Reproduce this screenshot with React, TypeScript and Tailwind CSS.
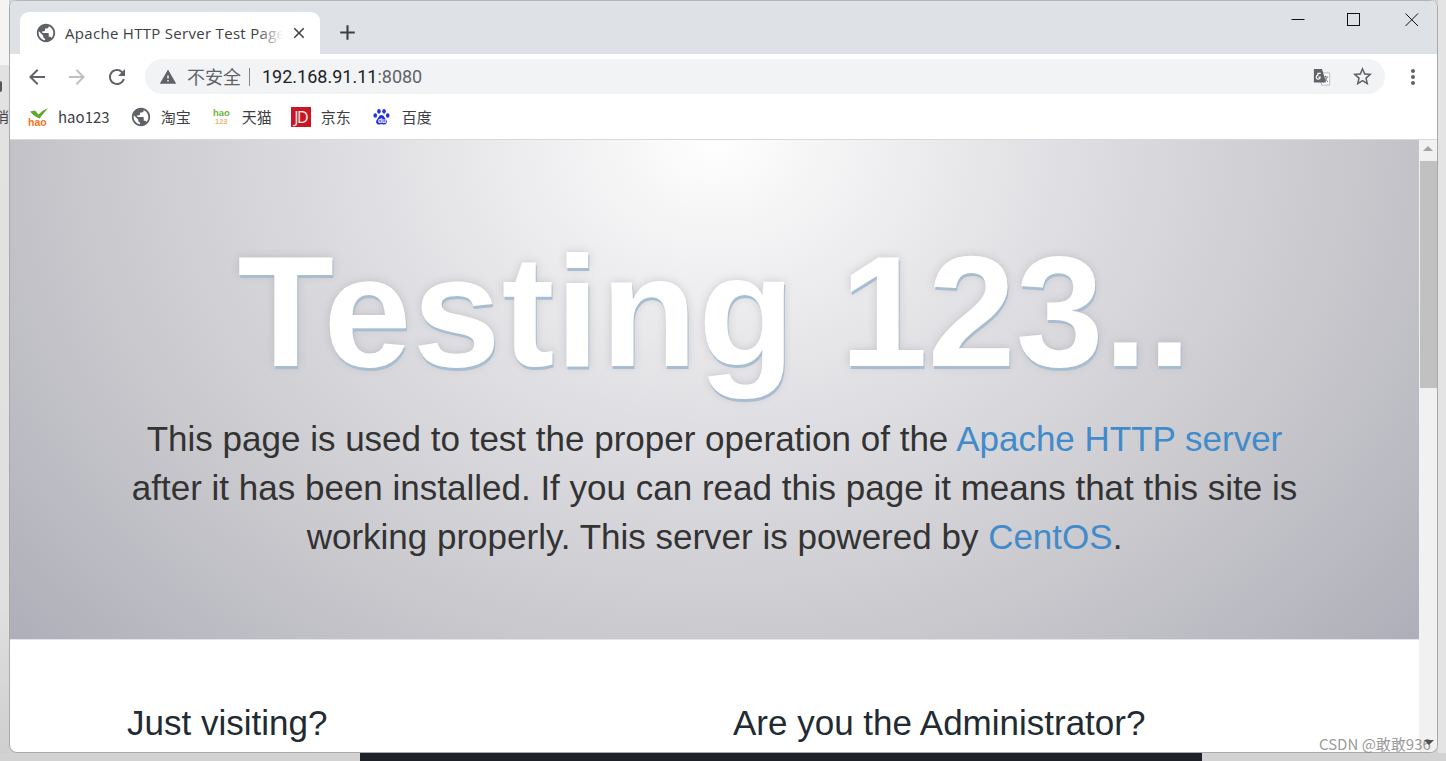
import { MdArrowBack, MdArrowForward, MdRefresh, MdMoreVert, MdWarning, MdClose, MdAdd, MdPublic, MdStarBorder } from "react-icons/md";

const cjk = "font-['Noto_Sans_CJK_SC','Liberation_Sans',sans-serif]";

function Hao() {
  return (
    <svg width="21" height="19" viewBox="0 0 21 19" className="shrink-0">
      <path d="M2 3.5 L7 2.5 L10.5 6.5 Q14 2.5 20 0 Q16 5 11.5 10.5 Q6 8.5 2 3.5Z" fill="#62a92b" />
      <text x="0" y="18" fontSize="10.5" fontWeight="700" fill="#f0781e" fontFamily="Liberation Sans" letterSpacing="0">hao</text>
    </svg>
  );
}

function Hao123Small() {
  return (
    <svg width="18" height="18" viewBox="0 0 18 18" className="shrink-0">
      <text x="0" y="8" fontSize="9.5" fontWeight="700" fill="#6cb33f" fontFamily="Liberation Sans">hao</text>
      <text x="2" y="16" fontSize="7.5" fontWeight="700" fill="#f2b27a" fontFamily="Liberation Sans">123</text>
    </svg>
  );
}

function Jd() {
  return (
    <div className="w-5 h-5 bg-[#c91623] text-[#fbe9ea] text-[16px] leading-5 text-center font-['Open_Sans',sans-serif] tracking-[-1.5px] shrink-0">JD</div>
  );
}

function Baidu() {
  return (
    <svg width="17" height="18" viewBox="0 0 18 18" className="shrink-0">
      <ellipse cx="6.3" cy="3" rx="1.9" ry="2.6" fill="#2932e1" />
      <ellipse cx="11.7" cy="3" rx="1.9" ry="2.6" fill="#2932e1" />
      <ellipse cx="2.4" cy="7.4" rx="1.9" ry="2.4" fill="#2932e1" />
      <ellipse cx="15.6" cy="7.4" rx="1.9" ry="2.4" fill="#2932e1" />
      <path d="M9 7 C6 7 6 10 4 12 C2 15 4.5 17.5 7 17 C8.5 16.7 9.5 16.7 11 17 C13.5 17.5 16 15 14 12 C12 10 12 7 9 7Z" fill="#2932e1" />
      <text x="5.2" y="15.5" fontSize="7" fontWeight="700" fill="#ffffff" fontFamily="Liberation Sans">du</text>
    </svg>
  );
}

function Bookmark({ icon, label, gap }: { icon: React.ReactNode; label: string; gap: string }) {
  return (
    <div className={`flex items-center ${gap}`}>
      {icon}
      <span className={`text-[15px] text-[#3c4043] ${cjk}`}>{label}</span>
    </div>
  );
}

function Translate() {
  return (
    <svg width="18" height="18" viewBox="0 0 20 20" className="shrink-0">
      <path d="M7.5 5.5 H18.5 V19 H9.5 Z" fill="#ffffff" stroke="#b4b6b9" strokeWidth="1" />
      <path d="M1 1 H10 L14.5 16 H1 Z" fill="#5f6368" />
      <path d="M8.6 6 H5.4 V8 A2.2 2.2 0 1 0 8 10.2 H6" fill="none" stroke="#ffffff" strokeWidth="1.3" />
      <path d="M11 10 H17 M14 8.5 V10 M12 16 L16 10.5 M13 11 L16.5 15.5" fill="none" stroke="#6a6d71" strokeWidth="1" />
    </svg>
  );
}

export default function App() {
  return (
    <div className="w-[1446px] h-[761px] overflow-hidden bg-[#d2d2d2] font-['Liberation_Sans',sans-serif]">
      <div className="flex h-[753px]">
        <div className="w-[9px] h-full bg-[linear-gradient(to_bottom,#f4f4f4_0,#f4f4f4_65px,#e2e2e2_65px,#e0e0e0_600px,#cfcfcf_100%)] overflow-hidden shrink-0 flex flex-col items-end">
          <div className="mt-[81px] mr-[7px] w-[2px] h-[11px] bg-[#555] rounded-r-full" />
          <div className={`mt-[14px] text-[14px] leading-5 text-[#444] whitespace-nowrap ${cjk}`}>消</div>
        </div>
        <div className="w-[1429px] h-full shrink-0 rounded-b-[8px] rounded-t-[8px] border-x border-b border-[#a9a9a9] overflow-hidden flex flex-col bg-white">
          {/* Title bar */}
          <div className="h-[54px] shrink-0 bg-[#dee1e6] border-t border-[#b5b5b5] flex items-end pl-[10px] relative">
            <div className="w-[300px] h-[42px] bg-white rounded-t-[9px] flex items-center pl-[15px] pr-[12px] relative">
              <MdPublic className="text-[#5f6368] shrink-0" size={22} />
              <div className="ml-[8px] w-[219px] overflow-hidden whitespace-nowrap text-[15px] tracking-[0.3px] text-[#3c4043] font-['Open_Sans',sans-serif] relative">
                Apache HTTP Server Test Page
                <div className="absolute right-0 top-0 bottom-0 w-[26px] bg-[linear-gradient(to_right,rgba(255,255,255,0),#ffffff)]" />
              </div>
              <MdClose className="text-[#3c4043] ml-[7px] shrink-0" size={18} />
            </div>
            <MdAdd className="text-[#3c4043] ml-[15px] mb-[9px] shrink-0" size={25} />
            <div className="ml-auto flex items-center self-start mt-[12px] pr-[18px]">
              <svg width="14" height="14" viewBox="0 0 14 14"><path d="M0.5 6.5 H13.5" stroke="#111" strokeWidth="1" /></svg>
              <svg width="14" height="14" viewBox="0 0 14 14" className="ml-[42px]"><rect x="0.5" y="0.5" width="12" height="12" fill="none" stroke="#111" strokeWidth="1" /></svg>
              <svg width="14" height="14" viewBox="0 0 14 14" className="ml-[44px]"><path d="M0.5 0.5 L13 13 M13 0.5 L0.5 13" stroke="#111" strokeWidth="1" /></svg>
            </div>
          </div>
          {/* Toolbar */}
          <div className="h-[46px] shrink-0 bg-white flex items-center pl-[15px] pb-[1px]">
            <MdArrowBack className="text-[#5f6368] shrink-0" size={24} />
            <MdArrowForward className="text-[#bdc1c6] ml-[16px] shrink-0" size={24} />
            <MdRefresh className="text-[#5f6368] ml-[16px] shrink-0" size={24} />
            <div className="ml-[16px] w-[1240px] h-[35px] rounded-full bg-[#f1f3f4] flex items-center pl-[14px] pr-[11px] shrink-0">
              <MdWarning className="text-[#5f6368] shrink-0" size={18} />
              <span className={`ml-[10px] text-[18px] text-[#5f6368] ${cjk}`}>不安全</span>
              <span className="ml-[8px] w-[1px] h-[18px] bg-[#80868b]" />
              <span className="ml-[12px] text-[18px] font-['Roboto',sans-serif] text-[#202124]">192.168.91.11<span className="text-[#5f6368]">:8080</span></span>
              <div className="ml-auto flex items-center gap-[20px]">
                <Translate />
                <MdStarBorder className="text-[#5f6368] shrink-0" size={23} />
              </div>
            </div>
            <MdMoreVert className="text-[#5f6368] ml-[16px] shrink-0" size={24} />
          </div>
          {/* Bookmarks */}
          <div className="h-[40px] shrink-0 bg-white border-b border-[#d8d9db] flex items-center pl-[18px] pb-[5px]">
            <Bookmark icon={<Hao />} label="hao123" gap="gap-[9px]" />
            <div className="ml-[20px]"><Bookmark icon={<MdPublic className="text-[#5f6368]" size={22} />} label="淘宝" gap="gap-[9px]" /></div>
            <div className="ml-[22px]"><Bookmark icon={<Hao123Small />} label="天猫" gap="gap-[11px]" /></div>
            <div className="ml-[19px]"><Bookmark icon={<Jd />} label="京东" gap="gap-[10px]" /></div>
            <div className="ml-[22px]"><Bookmark icon={<Baidu />} label="百度" gap="gap-[12px]" /></div>
          </div>
          {/* Content */}
          <div className="flex flex-1 min-h-0">
            <div className="w-[1409px] shrink-0 overflow-hidden flex flex-col">
              <div className="h-[500px] shrink-0 border-b border-[#e4e4e8] flex flex-col items-center bg-[radial-gradient(ellipse_760px_620px_at_50%_0%,#ffffff_0%,#f6f6f7_12%,#dedee2_48%,#c7c7cc_85%,#adadb8_125%)]">
                <h1 className="mt-[83px] text-[158px] leading-[176px] font-bold text-white whitespace-nowrap [text-shadow:1px_3px_0_#a9bdd1,0_0_8px_rgba(120,120,130,0.3)]"><span className="tracking-[1.2px]">Testing</span> 123..</h1>
                <p className="mt-[15px] w-[1200px] text-center text-[35px] leading-[49px] text-[#333333]">
                  This page is used to test the proper operation of the <span className="text-[#428bca]">Apache HTTP server</span> after it has been installed. If you can read this page it means that this site is working properly. This server is powered by <span className="text-[#428bca]">CentOS</span>.
                </p>
              </div>
              <div className="flex pl-[117px] pt-[60px] text-[35px] leading-[46px] text-[#222a32]">
                <h2 className="w-[606px]">Just visiting?</h2>
                <h2>Are you the Administrator?</h2>
              </div>
            </div>
            {/* Scrollbar */}
            <div className="w-[18px] shrink-0 bg-[#f1f1f1] flex flex-col items-center pt-[6px]">
              <div className="w-0 h-0 border-x-[5px] border-x-transparent border-b-[5px] border-b-[#a3a3a3]" />
              <div className="mt-[10px] w-[17px] h-[227px] bg-[#c1c1c1]" />
            </div>
          </div>
        </div>
        <div className="flex-1 h-full bg-[#e4e4e4]" />
      </div>
      <div className="ml-[360px] w-[842px] h-[8px] bg-[#1e2128]" />
      <div className={`absolute left-[1319px] top-[735px] text-[15px] leading-[18px] text-[#8d8d8d]/90 whitespace-nowrap ${cjk}`}>CSDN @敢敢936</div>
      <div className="absolute left-[1424px] top-[740px] w-0 h-0 border-x-[5px] border-x-transparent border-t-[5px] border-t-[#505050]" />
    </div>
  );
}
